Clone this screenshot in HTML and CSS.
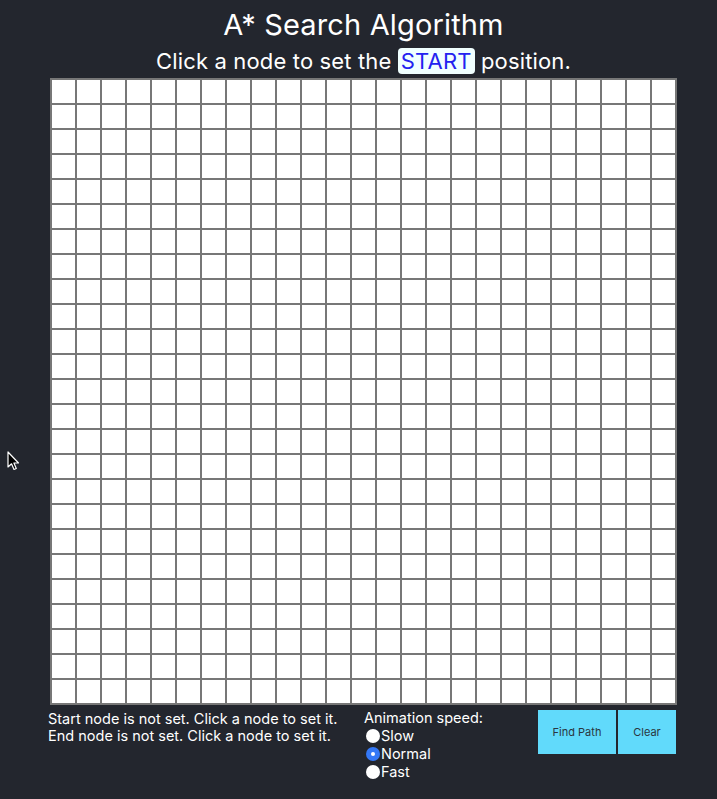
FILE: index.html
```html
<!DOCTYPE html>
<html lang="en">
<head>
<meta charset="utf-8">
<title>A* Search Algorithm</title>
<link rel="stylesheet" href="styles.css">
</head>
<body>
<div class="app">
  <h1 class="title">A* Search Algorithm</h1>
  <p class="subtitle">Click a node to set the <span class="tag">START</span> position.</p>
  <div class="grid" id="grid"></div>
  <div class="controls">
    <div class="status">
      <div>Start node is not set. Click a node to set it.</div>
      <div>End node is not set. Click a node to set it.</div>
    </div>
    <div class="speed">
      <div>Animation speed:</div>
      <label class="opt"><input type="radio" name="speed" class="radio">Slow</label>
      <label class="opt"><input type="radio" name="speed" class="radio" checked>Normal</label>
      <label class="opt"><input type="radio" name="speed" class="radio">Fast</label>
    </div>
    <div class="buttons">
      <button class="btn btn-find">Find Path</button>
      <button class="btn btn-clear">Clear</button>
    </div>
  </div>
</div>
<svg class="cursor" width="13" height="20" viewBox="0 0 13 20" aria-hidden="true">
  <path d="M1 1 L1 16 L4.5 12.8 L7 18.5 L9.3 17.5 L6.9 12 L11.5 12 Z" fill="#000" stroke="#fff" stroke-width="1.2" stroke-linejoin="round"/>
</svg>
<script src="script.js"></script>
</body>
</html>
```
FILE: styles.css
```css
html, body {
  background: #23262e;
}
body {
  margin: 8px;
  font-family: Inter, "Noto Sans", sans-serif;
  color: #fff;
}
.app {
  margin-left: 42px;
  width: 627px;
}
.title {
  margin: 0;
  font-size: 29px;
  letter-spacing: 0.15px;
  line-height: 34px;
  font-weight: 400;
  text-align: center;
}
.subtitle {
  margin: 4px 0 2px;
  font-size: 22px;
  letter-spacing: 0.15px;
  line-height: 30px;
  text-align: center;
}
.tag {
  background: #f0ffff;
  color: #2222f0;
  padding: 0 3px;
  border-radius: 4px;
}
.grid {
  display: grid;
  grid-template-columns: repeat(25, 25px);
  grid-auto-rows: 25px;
  border: 1px solid #777;
  width: 625px;
}
.cell {
  background: #fff;
  border: 1px solid #777;
}
.controls {
  display: grid;
  grid-template-columns: 316px 1fr auto;
  margin: 5px 0 0 -2px;
  width: 628px;
  font-size: 14.5px;
}
.status {
  line-height: 17px;
}
.speed {
  margin-top: -1px;
  line-height: 18px;
  display: flex;
  flex-direction: column;
}
.opt {
  display: flex;
  align-items: center;
}
.radio {
  appearance: none;
  -webkit-appearance: none;
  width: 14px;
  height: 14px;
  margin: 0 1px 0 2px;
  border-radius: 50%;
  background: #fff;
  display: grid;
  place-content: center;
}
.radio:checked {
  background: #3478f6;
}
.radio:checked::after {
  content: "";
  width: 4px;
  height: 4px;
  border-radius: 50%;
  background: #fff;
}
.buttons {
  display: flex;
  gap: 2px;
}
.btn {
  height: 44px;
  border: none;
  background: #61dafb;
  color: #2a3640;
  font-family: Inter, "Noto Sans", sans-serif;
  font-size: 11px;
  padding: 0;
  border-radius: 0;
}
.btn-find {
  width: 78px;
}
.btn-clear {
  width: 58px;
}
.cursor {
  position: absolute;
  left: 7px;
  top: 451px;
}
```
FILE: script.js
```js
const grid = document.getElementById('grid');
for (let i = 0; i < 625; i++) {
  const c = document.createElement('div');
  c.className = 'cell';
  grid.appendChild(c);
}
```
